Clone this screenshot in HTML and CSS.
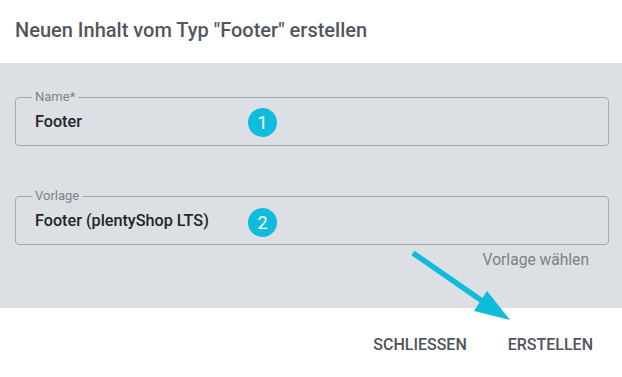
FILE: index.html
```html
<!DOCTYPE html>
<html lang="de">
<head>
<meta charset="utf-8">
<title>Neuen Inhalt erstellen</title>
<link rel="stylesheet" href="styles.css">
</head>
<body>
<div class="dialog">
  <header class="dialog-header">
    <h1 class="dialog-title">Neuen Inhalt vom Typ "Footer" erstellen</h1>
  </header>
  <main class="dialog-body">
    <fieldset class="field">
      <legend class="field-label">Name*</legend>
      <div class="field-value">Footer</div>
    </fieldset>
    <fieldset class="field field-second">
      <legend class="field-label">Vorlage</legend>
      <div class="field-value">Footer (plentyShop LTS)</div>
    </fieldset>
    <div class="field-hint">Vorlage wählen</div>
  </main>
  <footer class="dialog-actions">
    <button class="action">SCHLIESSEN</button>
    <button class="action">ERSTELLEN</button>
  </footer>
</div>
<div class="annotations">
  <div class="badge badge-1">1</div>
  <div class="badge badge-2">2</div>
  <svg class="arrow" width="622" height="377" viewBox="0 0 622 377">
    <line x1="413" y1="253" x2="488" y2="305" stroke="#0fbcdc" stroke-width="5.5" stroke-linecap="butt"/>
    <polygon points="510,320 487,291 474,311" fill="#0fbcdc"/>
  </svg>
</div>
</body>
</html>
```
FILE: styles.css
```css
html, body {
  margin: 0;
  padding: 0;
}
body {
  width: 622px;
  height: 377px;
  background: #ffffff;
  font-family: Roboto, "Liberation Sans", Arial, sans-serif;
  position: relative;
  overflow: hidden;
}
.dialog {
  display: flex;
  flex-direction: column;
  width: 622px;
  height: 377px;
}
.dialog-header {
  height: 63px;
  box-sizing: border-box;
  padding: 18px 15px 0;
}
.dialog-title {
  margin: 0;
  font-size: 20px;
  line-height: 24px;
  font-weight: 500;
  color: #52575e;
}
.dialog-body {
  height: 245px;
  box-sizing: border-box;
  background: #dcdfe3;
  padding: 27px 13px 0 15px;
  display: flex;
  flex-direction: column;
}
.field {
  margin: 0;
  padding: 0 15px 14px 16px;
  border: 1px solid #a5a8ac;
  border-radius: 4px;
  min-width: 0;
}
.field-second {
  margin-top: 43px;
}
.field-label {
  padding: 0 3px;
  font-size: 13px;
  line-height: 14px;
  color: #7f8389;
}
.field-value {
  padding: 8px 3px 0;
  font-size: 16.2px;
  line-height: 19px;
  font-weight: 500;
  color: #23252a;
}
.field-hint {
  align-self: flex-end;
  margin-top: 6px;
  margin-right: 20px;
  font-size: 15.6px;
  line-height: 18px;
  color: #7c8086;
}
.dialog-actions {
  flex: 1;
  display: flex;
  justify-content: flex-end;
  align-items: flex-start;
  gap: 25px;
  padding: 27px 21px 0 0;
}
.action {
  border: 0;
  background: transparent;
  padding: 0 8px;
  font-family: Roboto, "Liberation Sans", Arial, sans-serif;
  font-size: 16px;
  line-height: 19px;
  font-weight: 500;
  color: #50545b;
  cursor: pointer;
}
.annotations {
  position: absolute;
  left: 0;
  top: 0;
  width: 622px;
  height: 377px;
  pointer-events: none;
}
.arrow {
  position: absolute;
  left: 0;
  top: 0;
}
.badge {
  position: absolute;
  left: 248px;
  width: 29px;
  height: 29px;
  border-radius: 50%;
  background: #0fbcdc;
  color: #ffffff;
  font-size: 18px;
  line-height: 29px;
  text-align: center;
}
.badge-1 {
  top: 108px;
}
.badge-2 {
  top: 208px;
}
```
